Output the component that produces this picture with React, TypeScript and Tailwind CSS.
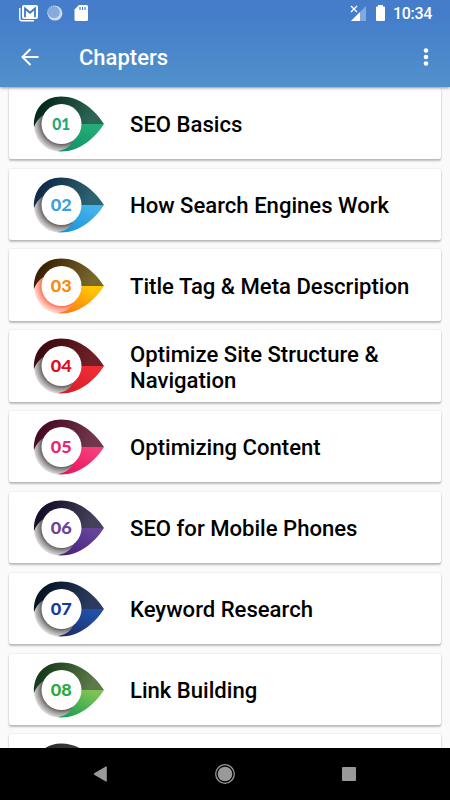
import React from 'react';

interface Chapter {
  number: string;
  title: string;
  text: string;
  top: [string, string];
  bottom: [string, string];
  shade?: string;
}

const chapters: Chapter[] = [
  { number: '01', title: 'SEO Basics', text: '#1fa971', top: ['#06291f', '#2d6654'], bottom: ['#129069', '#23ac74'] },
  { number: '02', title: 'How Search Engines Work', text: '#3c9fdd', top: ['#102c4b', '#2c6371'], bottom: ['#1b93d5', '#44b2ed'] },
  { number: '03', title: 'Title Tag & Meta Description', text: '#f78b0c', top: ['#3d2105', '#77682b'], bottom: ['#fb7b16', '#ffc500'], shade: '#ff3b18' },
  { number: '04', title: 'Optimize Site Structure & Navigation', text: '#e30c1a', top: ['#3b0c10', '#6f2025'], bottom: ['#d21f29', '#ef2c33'] },
  { number: '05', title: 'Optimizing Content', text: '#ec256c', top: ['#480b26', '#70364c'], bottom: ['#e9125f', '#f63c79'] },
  { number: '06', title: 'SEO for Mobile Phones', text: '#6b429c', top: ['#170f2a', '#454059'], bottom: ['#48237f', '#654399'] },
  { number: '07', title: 'Keyword Research', text: '#1439a0', top: ['#071426', '#2b3c5e'], bottom: ['#1f2c67', '#2050a9'] },
  { number: '08', title: 'Link Building', text: '#2dab39', top: ['#173b1b', '#5d7849'], bottom: ['#18a150', '#7bc154'] },
  { number: '', title: '', text: '#333333', top: ['#292929', '#494949'], bottom: ['#333333', '#555555'] },
];

const ChapterIcon: React.FC<{ chapter: Chapter }> = ({ chapter }) => {
  const { number, text, top, bottom, shade = '#2a2422' } = chapter;

  return (
    <svg width="72" height="56" viewBox="0 0 72 56" className="mt-px shrink-0">
      <defs>
        <linearGradient id={`top-${number}`} x1="0" y1="0.4" x2="1" y2="0.6">
          <stop offset="0.1" stopColor={top[0]} />
          <stop offset="0.85" stopColor={top[1]} />
        </linearGradient>
        <linearGradient id={`bottom-${number}`} x1="0" y1="1" x2="0.8" y2="0">
          <stop offset="0.1" stopColor={bottom[0]} />
          <stop offset="0.9" stopColor={bottom[1]} />
        </linearGradient>
        <radialGradient id={`shade-${number}`} gradientUnits="userSpaceOnUse" cx="29" cy="27.5" r="29">
          <stop offset="0.66" stopColor={shade} stopOpacity="0.85" />
          <stop offset="0.8" stopColor={shade} stopOpacity="0.5" />
          <stop offset="1" stopColor={shade} stopOpacity="0.12" />
        </radialGradient>
      </defs>
      <path d="M1 28C1 43.5 12 55.5 27 55.5L42 48L28.5 28L10 15C5 18 2 23 1 28Z" fill={`url(#shade-${number})`} />
      <path d="M1 31C0 12 12 .5 28 .5C47 .5 62 14 71 28H28.5L9.5 19.5C5.5 22.5 2.5 26.5 1 31Z" fill={`url(#top-${number})`} />
      <path d="M71 28C62 42 47 55.5 28 55.5L24 55C31 54.3 36 51.5 39.5 46L48 28Z" fill={`url(#bottom-${number})`} />
      <circle cx="28.5" cy="28" r="20" fill="#fff" />
      <text
        x="28.3"
        y="33.9"
        textAnchor="middle"
        textLength={number === '01' ? 18 : 21}
        lengthAdjust="spacingAndGlyphs"
        className="font-['Lato',sans-serif] text-[16.5px] font-black"
        fill={text}
      >
        {number}
      </text>
    </svg>
  );
};

const ChapterCard: React.FC<{ chapter: Chapter }> = ({ chapter }) => (
  <div className="flex h-[71.4px] shrink-0 items-center rounded-[2px] bg-white pl-6 shadow-[0_2px_2px_rgba(0,0,0,0.24),0_0_2px_rgba(0,0,0,0.14)]">
    <ChapterIcon chapter={chapter} />
    <h2 className="ml-[25px] w-[290px] pt-[1.4px] text-[22.1px] leading-[26px] font-medium text-black">{chapter.title}</h2>
  </div>
);

const StatusBar: React.FC = () => (
  <div className="flex h-[28px] items-center pr-[17px] pl-[18px]">
    <svg width="72" height="18" viewBox="0 0 72 18" fill="none">
      <path d="M1.8 3V13.8Q1.8 15.8 3.8 15.8H16" stroke="#fff" strokeWidth="1.4" />
      <rect x="4" y="0" width="16" height="14" rx="2" fill="#fff" />
      <path d="M7 12.2V3.5L12 7.8L17 3.5V12.2" stroke="#3979c8" strokeWidth="1.8" />
      <circle cx="37" cy="8.2" r="7.4" fill="#c9daf1" />
      <circle cx="35.9" cy="7.2" r="6.1" fill="#87a9dc" />
      <circle cx="35.9" cy="7.2" r="6.3" stroke="#dce7f6" strokeWidth=".8" strokeDasharray="1 1" />
      <path d="M61 0H68.5Q70 0 70 1.5V14.5Q70 16 68.5 16H58Q56.5 16 56.5 14.5V4.5Z" fill="#fff" />
      <path d="M62 2V5M64.5 2V5M67 2V5" stroke="#4780cc" strokeWidth="1.2" />
    </svg>
    <svg width="36" height="18" viewBox="0 0 36 18" className="ml-auto">
      <path d="M16 1V16H1Z" fill="#83a8dc" />
      <path d="M10 7V16H1Z" fill="#fff" />
      <path d="M1 1L7 7M7 1L1 7" stroke="#fff" strokeWidth="1.3" />
      <path d="M28 0H33V1.5H34Q35 1.5 35 2.5V15Q35 16 34 16H27Q26 16 26 15V2.5Q26 1.5 27 1.5H28Z" fill="#fff" />
    </svg>
    <span className="ml-[7px] w-[40px] text-[16px] leading-none font-medium tracking-[-0.3px]">10:34</span>
  </div>
);

const Header: React.FC = () => (
  <header className="relative z-10 h-[87px] shrink-0 bg-linear-to-b from-[#457dcb] from-20% to-[#5191ca] text-white shadow-[0_1px_3px_rgba(0,0,0,0.4)]">
    <StatusBar />
    <div className="flex h-[58px] items-center pr-[20px] pl-[20px]">
      <svg width="20" height="20" viewBox="0 0 20 20" fill="none" stroke="#fff" strokeWidth="2">
        <path d="M18.5 10H2.5M10.5 2L2.5 10L10.5 18" />
      </svg>
      <h1 className="ml-[39px] pt-[2px] text-[22px] leading-7 font-medium">Chapters</h1>
      <svg width="8" height="20" viewBox="0 0 8 20" fill="#fff" className="ml-auto">
        <circle cx="4" cy="3.5" r="2.3" />
        <circle cx="4" cy="10" r="2.3" />
        <circle cx="4" cy="16.5" r="2.3" />
      </svg>
    </div>
  </header>
);

const NavigationBar: React.FC = () => (
  <nav className="relative z-10 flex h-[52px] shrink-0 items-center justify-between bg-black pr-[91px] pl-[90px]">
    <svg width="20" height="20" viewBox="0 0 20 20" fill="#999">
      <path d="M16.8 3V17Q16.8 18 15.8 17.5L4.2 10.7Q3.5 10 4.2 9.3L15.8 2.5Q16.8 2 16.8 3Z" />
    </svg>
    <svg width="22" height="22" viewBox="0 0 22 22" fill="none">
      <circle cx="11" cy="11" r="9.3" stroke="#999" strokeWidth="1.3" />
      <circle cx="11" cy="11" r="7.3" fill="#999" />
    </svg>
    <svg width="20" height="20" viewBox="0 0 20 20">
      <rect x="3" y="3" width="14" height="14" rx="1" fill="#999" />
    </svg>
  </nav>
);

export default function App() {
  return (
    <div className="flex h-[800px] w-[450px] flex-col overflow-hidden bg-[#fafafa] font-['Roboto',sans-serif]">
      <Header />
      <main className="flex min-h-0 flex-1 flex-col gap-[9.46px] overflow-hidden px-[9px] pt-[0.7px]">
        {chapters.map((chapter) => (
          <ChapterCard key={chapter.title} chapter={chapter} />
        ))}
      </main>
      <NavigationBar />
    </div>
  );
}
